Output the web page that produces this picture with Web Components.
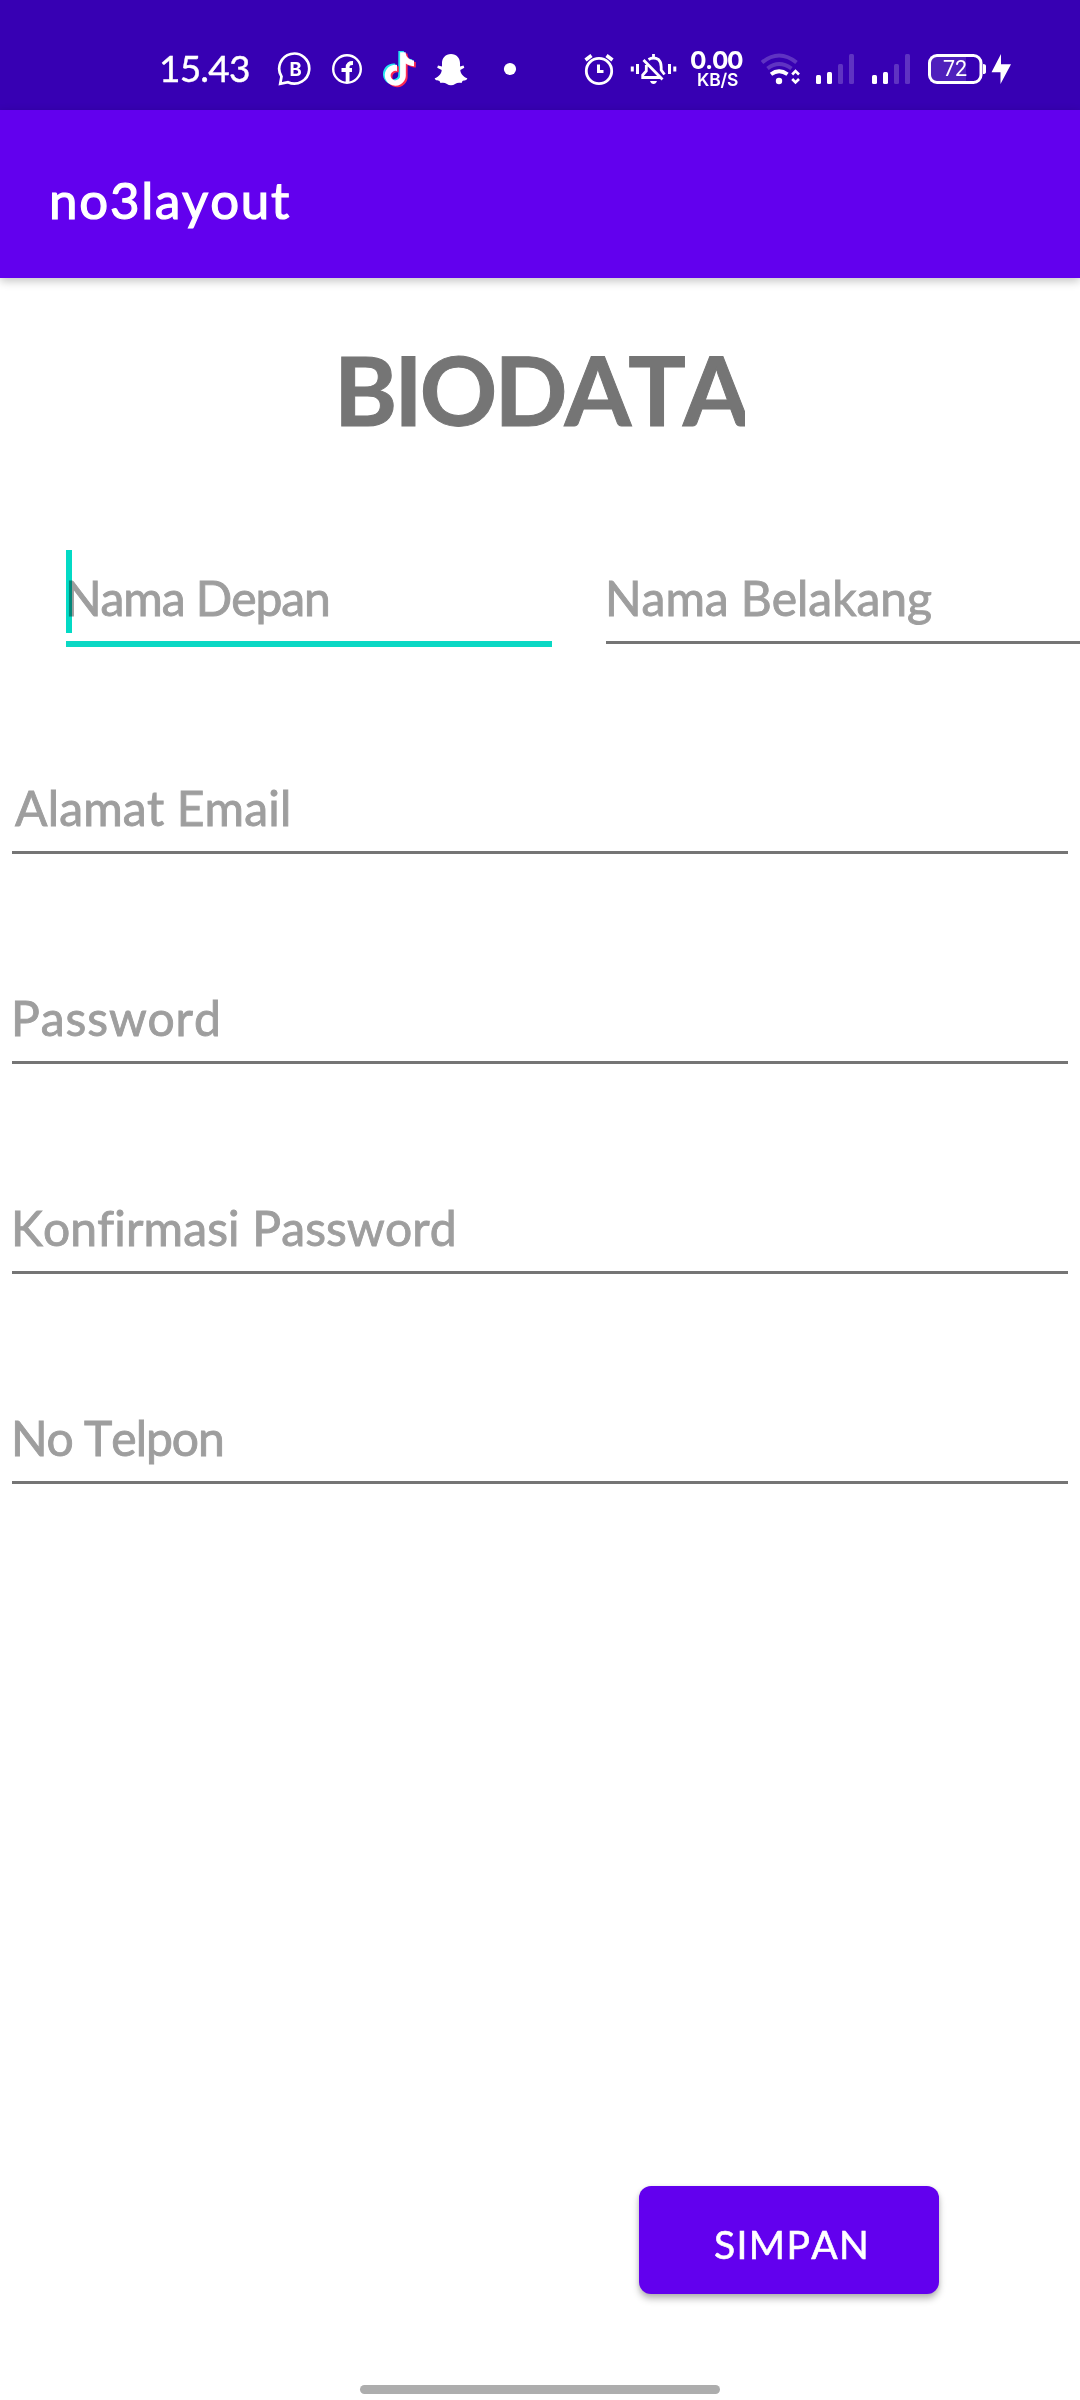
<!DOCTYPE html>
<html lang="id">
<head>
<meta charset="utf-8">
<title>no3layout</title>
<style>
html,body{margin:0;background:#fff}
body{width:1080px;height:2400px;overflow:hidden;font-family:Lato,"Noto Sans",sans-serif}
</style>
</head>
<body>
<biodata-screen></biodata-screen>
<script>
const define = (name, html, setup) => customElements.define(name, class extends HTMLElement {
  connectedCallback() {
    if (this.shadowRoot) return;
    const t = document.createElement('template');
    t.innerHTML = html;
    this.attachShadow({mode: 'open'}).appendChild(t.content.cloneNode(true));
    if (setup) setup(this);
  }
});

// Tracks its text so that the visible ink spans exactly `ink` pixels from the left edge.
define('fit-text', `<style>:host{display:block;white-space:pre;font-kerning:none;font-variant-ligatures:none}span{display:block}</style><span><slot></slot></span>`, el => {
  const text = el.textContent, cs = getComputedStyle(el);
  const ctx = document.createElement('canvas').getContext('2d');
  ctx.font = cs.fontWeight + ' ' + cs.fontSize + ' ' + cs.fontFamily;
  ctx.fontKerning = 'none';
  const m = ctx.measureText(text);
  const ink = m.actualBoundingBoxRight + m.actualBoundingBoxLeft;
  el.style.letterSpacing = ((+el.getAttribute('ink') - ink) / (text.length - 1)) + 'px';
  el.shadowRoot.querySelector('span').style.marginLeft = m.actualBoundingBoxLeft + 'px';
});

define('status-bar', `<style>
:host{display:flex;height:110px;background:#3700b3;color:#fff;padding-left:162px;box-sizing:border-box}
svg{display:block;flex:none;height:110px;fill:#fff}
.clock{width:114px;font-size:37px;line-height:110px;padding-top:13px;-webkit-text-stroke:.4px}
.speed{width:54px;margin-right:16px;font-family:Inter,sans-serif;font-weight:700}
.speed .n{font-size:24.5px;line-height:21px;padding-top:50px}
.speed .u{font-size:17.5px;line-height:17px;margin-left:7px;font-weight:600}
.l{fill:none;stroke:#fff;stroke-width:3}
.dim{fill:#5f33c2}
</style>
<div class="clock"><fit-text ink="87">15.43</fit-text></div>
<svg width="44" viewBox="276 0 44 110"><path class="l" style="stroke-width:2.7" d="M281.5 76.5A15 15 0 1 1 288 82.2L280.2 83.8Z"/><text x="289.4" y="75.6" font-family="Inter" font-size="18.5" font-weight="700">B</text></svg>
<svg width="60" viewBox="320 0 60 110"><circle class="l" style="stroke-width:2.4" cx="347" cy="69" r="13.8"/><path class="l" style="stroke-width:3.8" d="M347.6 83V67.4Q347.6 62.8 353 63M341.5 70H352"/></svg>
<svg width="52" viewBox="380 0 52 110"><defs><path id="note" d="M12.525.02c1.31-.02 2.61-.01 3.91-.02.08 1.53.63 3.09 1.75 4.17 1.12 1.11 2.7 1.62 4.24 1.79v4.03c-1.44-.05-2.89-.35-4.2-.97-.57-.26-1.1-.59-1.62-.93-.01 2.92.01 5.84-.02 8.75-.08 1.4-.54 2.79-1.35 3.94-1.31 1.92-3.58 3.17-5.91 3.21-1.43.08-2.86-.31-4.08-1.03-2.02-1.19-3.44-3.37-3.65-5.71-.02-.5-.03-1-.01-1.49.18-1.9 1.12-3.72 2.58-4.96 1.66-1.44 3.98-2.13 6.15-1.72.02 1.48-.04 2.96-.04 4.44-.99-.32-2.15-.23-3.02.37-.63.41-1.11 1.04-1.36 1.75-.21.51-.15 1.07-.14 1.61.24 1.64 1.82 3.02 3.5 2.87 1.12-.01 2.19-.66 2.77-1.61.19-.33.4-.67.41-1.06.1-1.79.06-3.57.07-5.36.01-4.03-.01-8.05.02-12.07z"/></defs>
<use href="#note" fill="#25e5ef" transform="translate(380.8 51) scale(1.4)"/><use href="#note" fill="#fe2c55" transform="translate(384.4 53.6) scale(1.4)"/><use href="#note" transform="translate(382.600 52.200) scale(1.4)"/></svg>
<svg width="54" viewBox="432 0 54 110"><path d="M451 54C445.500 54 442 58 442 63V66.500L438 65.500L437.200 67.700L441.700 70C441.500 74 438.500 76.700 434.800 78.300C434.500 80.200 438 80.500 439.500 81L440.500 83C443 82.500 445 82.700 446.500 83.700C449.500 85.700 452.500 85.700 455.500 83.700C457 82.700 459 82.500 461.500 83L462.500 81C464 80.500 467.500 80.200 467.200 78.300C463.500 76.700 460.500 74 460.300 70L464.300 67.700L463.500 65.500L460 66.500V63C460 58 456.500 54 451 54Z"/></svg>
<svg width="94" viewBox="486 0 94 110"><circle cx="510" cy="69" r="6.1"/></svg>
<svg width="48" viewBox="580 0 48 110"><circle class="l" style="stroke-width:2.8" cx="599" cy="71" r="12.7"/><path class="l" style="stroke-width:3.6" d="M585.500 60L591.500 55.500M606.500 55.500L612.500 60"/><path class="l" d="M598.500 64.500V71.500H603.500"/></svg>
<svg width="63" viewBox="628 0 63 110"><path class="l" d="M632.300 66.500V71.500M637.500 64V74M669.500 64V74M674.800 66.500V71.500"/><path d="M650 81H657Q656 84 653.500 84Q651 84 650 81Z"/><path class="l" style="stroke-width:2.8" d="M653.500 54V57.500M648.500 59.500Q653.500 56.500 658.500 59.500Q661.200 62 661.200 67V70L664.500 74.500M646.300 65V71L642.700 75V77.500H660.500M643.500 60L662.500 79.500"/></svg>
<div class="speed"><fit-text class="n" ink="52">0.00</fit-text><fit-text class="u" ink="40">KB/S</fit-text></div>
<svg width="49" viewBox="761 0 49 110"><g fill="none"><path d="M762 62.500Q779 48.500 796.500 62.500M767.500 68.500Q779 59.500 791.500 68.500" stroke="#5f33c2" stroke-width="4"/><path class="l" style="stroke-width:3.8" d="M771 74.300Q779 68.200 787.500 74.300"/><path class="l" style="stroke-width:2.6" d="M792.200 74.500L795.500 71L799 74.500M792.200 79L795.500 82.500L799 79"/></g><circle cx="779" cy="81" r="3.2"/></svg>
<svg width="56" viewBox="810 0 56 110"><rect x="816" y="75" width="5" height="9" rx="1.500"/><rect x="827" y="72" width="5" height="12" rx="1.500"/><rect class="dim" x="838" y="64" width="5" height="20" rx="1.500"/><rect class="dim" x="849" y="54" width="5" height="30" rx="1.500"/></svg>
<svg width="56" viewBox="810 0 56 110"><rect x="816" y="75" width="5" height="9" rx="1.500"/><rect x="827" y="72" width="5" height="12" rx="1.500"/><rect class="dim" x="838" y="64" width="5" height="20" rx="1.500"/><rect class="dim" x="849" y="54" width="5" height="30" rx="1.500"/></svg>
<svg width="98" viewBox="922 0 98 110"><path fill="#4f20bc" d="M930 56H966V82H930Z"/><rect class="l" x="929.500" y="55.500" width="51.500" height="27" rx="7.500"/><path d="M983 64Q986 64 986 66V72Q986 74 983 74ZM1001 54L991.500 72.200H1000.500V84L1011 64.300H1001Z"/><text x="943" y="76.300" font-family="Roboto" font-size="21.500" font-weight="400" textLength="24">72</text></svg>`);

define('app-bar', `<style>:host{display:flex;height:168px;background:#6200ee;color:#fff;box-shadow:0 3px 9px rgba(0,0,0,.24);padding:3px 0 0 52px;box-sizing:border-box;font-size:51px;line-height:174px;-webkit-text-stroke:1.2px;position:relative}</style><fit-text ink="237">no3layout</fit-text>`);

// Underlined input with a hint; `focused` adds the caret and the accent line.
define('text-field', `<style>
:host{display:block;flex:none;box-sizing:border-box;height:94px;border-bottom:3px solid #757575;color:#9e9e9e;font-size:48px;line-height:83px;padding:6px 0 0 3px;-webkit-text-stroke:.9px}
:host([focused]){height:97px;border-bottom:6px solid #0bd8c4;position:relative}
i{display:none}
:host([focused]) i{display:block;position:absolute;left:0;top:0;width:6px;height:83px;background:#03dac5;mix-blend-mode:multiply}
</style><fit-text></fit-text><i></i>`, el => {
  const old = el.shadowRoot.querySelector('fit-text'), f = document.createElement('fit-text');
  f.textContent = el.getAttribute('hint');
  f.setAttribute('ink', el.getAttribute('ink'));
  old.replaceWith(f);
});

define('save-button', `<style>:host{display:block;width:300px;height:108px;box-sizing:border-box;border-radius:12px;background:#6200ee;color:#fff;box-shadow:0 5px 7px rgba(0,0,0,.26),0 1px 4px rgba(0,0,0,.1);padding:8px 0 0 76px;font-size:39px;line-height:100px;-webkit-text-stroke:.6px}</style><fit-text ink="151">SIMPAN</fit-text>`);

define('biodata-screen', `<style>
:host{display:flex;flex-direction:column;width:1080px;height:2400px;background:#fff;overflow:hidden}
main{display:flex;flex-direction:column;flex:1;padding-top:53px}
h1{margin:0 0 103px 341px;width:404px;height:116px;overflow:hidden;font-size:96px;line-height:116px;font-weight:700;color:#757575;-webkit-text-stroke:1px}
.names{display:flex;height:94px;padding-left:66px;gap:54px;align-items:flex-start}
.names text-field:first-child{width:486px}
.names text-field:last-child{width:480px}
.fields{display:flex;flex-direction:column;gap:116px;padding:116px 12px 0}
save-button{margin:auto 0 0 639px}
.home{width:360px;height:9px;border-radius:5px;background:#adadad;margin:91px 0 6px 360px}
</style>
<status-bar></status-bar><app-bar></app-bar>
<main><h1><fit-text ink="410">BIODATA</fit-text></h1>
<div class="names"><text-field focused hint="Nama Depan" ink="259"></text-field><text-field hint="Nama Belakang" ink="322"></text-field></div>
<div class="fields"><text-field hint="Alamat Email" ink="273"></text-field><text-field hint="Password" ink="203"></text-field><text-field hint="Konfirmasi Password" ink="438"></text-field><text-field hint="No Telpon" ink="207"></text-field></div>
<save-button></save-button><div class="home"></div></main>`);
</script>
</body>
</html>
